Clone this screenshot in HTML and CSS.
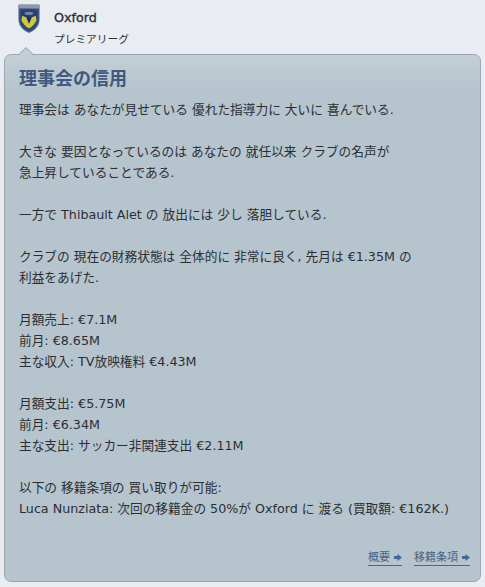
FILE: index.html
```html
<!DOCTYPE html>
<html lang="ja">
<head>
<meta charset="utf-8">
<title>理事会の信用</title>
<link rel="stylesheet" href="styles.css">
</head>
<body>
<header class="club">
  <svg class="crest" width="22" height="29" viewBox="0 0 26 32" preserveAspectRatio="none">
    <path d="M1 1H25V17C25 25 19 29 13 31.500C7 29 1 25 1 17Z" fill="#2f4a80" stroke="#6a7a96" stroke-width="1"/>
    <path d="M1 1H25V5H1Z" fill="#8b98ad"/>
    <path d="M4 8C9 6 17 6 22 8V18C21 22 17 26 13 28C9 26 5 22 4 18Z" fill="#263c70"/>
    <path d="M5 13L10 15L13 22L16 15L21 13L22 18C20 22 17 25 13 27C9 25 6 22 4 18Z" fill="#cfc935"/>
    <path d="M7 10C10 8 16 8 19 10L16 12H10Z" fill="#6f86a8"/>
    <path d="M10 15H16L13 21Z" fill="#1e2d55"/>
  </svg>
  <div class="club-text">
    <div class="club-name">Oxford</div>
    <div class="club-league">プレミアリーグ</div>
  </div>
</header>
<main class="panel">
  <span class="notch"></span>
  <h1 class="title">理事会の信用</h1>
  <p>理事会は あなたが見せている 優れた指導力に 大いに 喜んでいる.</p>
  <p>大きな 要因となっているのは あなたの 就任以来 クラブの名声が<br>急上昇していることである.</p>
  <p>一方で Thibault Alet の 放出には 少し 落胆している.</p>
  <p>クラブの 現在の財務状態は 全体的に 非常に良く, 先月は €1.35M の<br>利益をあげた.</p>
  <p>月額売上: €7.1M<br>前月: €8.65M<br>主な収入: TV放映権料 €4.43M</p>
  <p>月額支出: €5.75M<br>前月: €6.34M<br>主な支出: サッカー非関連支出 €2.11M</p>
  <p>以下の 移籍条項の 買い取りが可能:<br>Luca Nunziata: 次回の移籍金の 50%が Oxford に 渡る (買取額: €162K.)</p>
  <nav class="links">
    <a class="link">概要<svg class="arrow" width="8" height="7" viewBox="0 0 8 7"><path d="M0 2H3.500V0L8 3.500L3.500 7V5H0Z"/></svg></a>
    <a class="link">移籍条項<svg class="arrow" width="8" height="7" viewBox="0 0 8 7"><path d="M0 2H3.500V0L8 3.500L3.500 7V5H0Z"/></svg></a>
  </nav>
</main>
</body>
</html>
```
FILE: styles.css
```css
html, body {
  margin: 0;
  height: 100%;
}
body {
  width: 485px;
  height: 587px;
  overflow: hidden;
  background: #e9ecf1;
  font-family: "DejaVu Sans", "Noto Sans CJK JP", sans-serif;
  font-size: 12.7px;
  line-height: 21px;
  color: #2b2f34;
  box-sizing: border-box;
  padding: 4px 4px 5px;
  display: flex;
  flex-direction: column;
}
.club {
  height: 50px;
  flex: none;
  display: flex;
  align-items: flex-start;
  gap: 14px;
  padding-left: 14px;
}
.crest {
  flex: none;
}
.club-text {
  margin-top: 3px;
}
.club-name {
  font-size: 12.7px;
  -webkit-text-stroke: 0.35px #2a3038;
  color: #2a3038;
  line-height: 21px;
}
.club-league {
  margin-top: 1px;
  font-size: 10.7px;
  line-height: 21px;
  color: #2a3038;
}
.panel {
  position: relative;
  flex: 1;
  box-sizing: border-box;
  border: 1px solid #98a6b6;
  border-radius: 7px;
  background: linear-gradient(#c4ced5 0, #b6c4ce 36px, #b6c4ce 100%);
  padding: 11px 14px 0;
  display: flex;
  flex-direction: column;
}
.notch {
  position: absolute;
  left: 15px;
  top: -6px;
  width: 11px;
  height: 11px;
  background: #c4ced5;
  border-left: 1px solid #98a6b6;
  border-top: 1px solid #98a6b6;
  transform: rotate(45deg);
  border-top-left-radius: 2px;
}
.title {
  position: relative;
  margin: 0 0 7px;
  font-size: 18px;
  line-height: 26px;
  font-weight: bold;
  color: #3f5a7e;
}
p {
  margin: 0 0 21px;
}
.links {
  margin-top: auto;
  margin-bottom: 15px;
  margin-right: -4px;
  display: flex;
  justify-content: flex-end;
  gap: 12px;
  font-size: 11px;
  line-height: 15px;
}
.link {
  color: #4a6284;
  border-bottom: 1px solid #3f6a9a;
  display: flex;
  align-items: center;
  gap: 4px;
}
.arrow {
  fill: #3f6a9a;
}
```
